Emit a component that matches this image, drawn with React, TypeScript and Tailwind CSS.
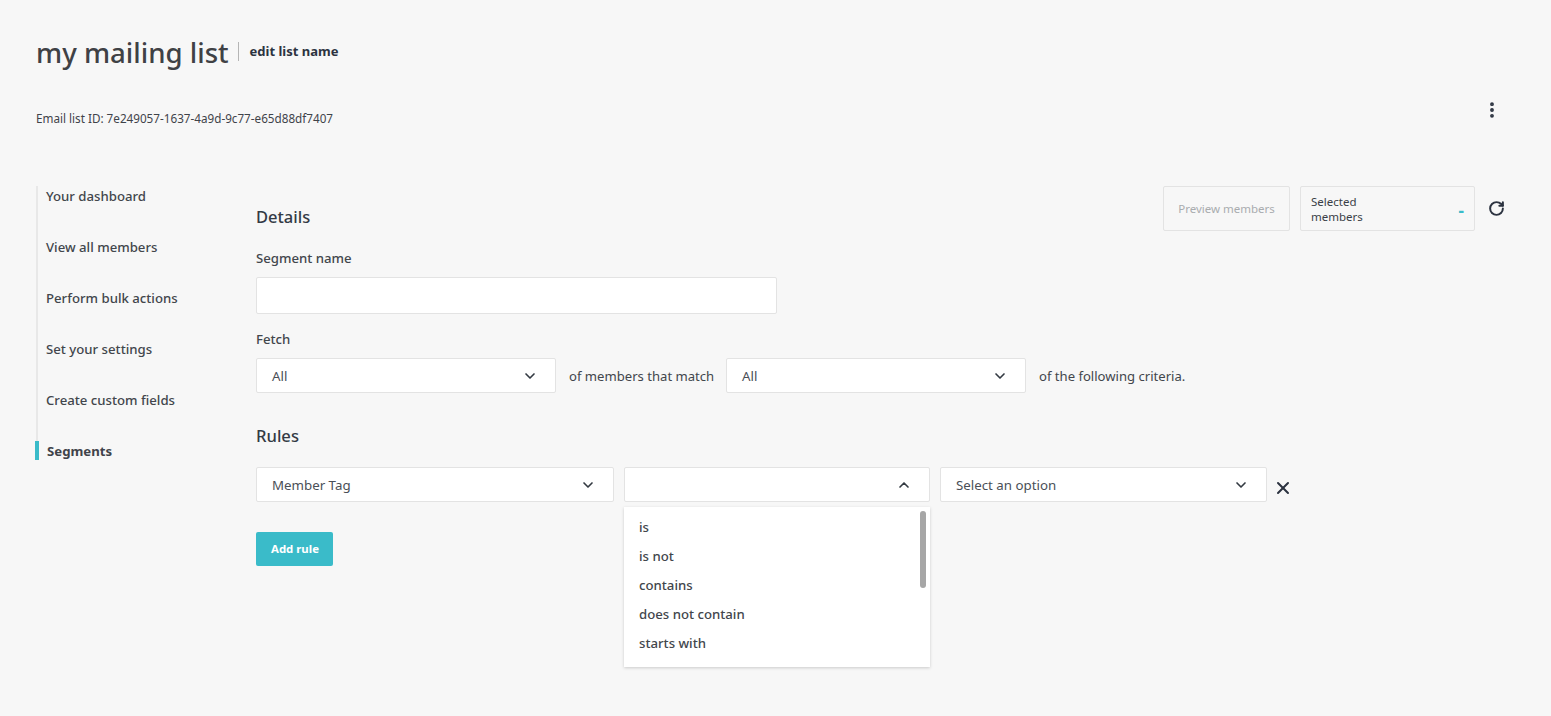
import { ChevronDown, ChevronUp, X, RotateCw, MoreVertical } from 'lucide-react';

const navItems = ['Your dashboard', 'View all members', 'Perform bulk actions', 'Set your settings', 'Create custom fields'];
const options = ['is', 'is not', 'contains', 'does not contain', 'starts with'];

function Select({ value, open, className }: { value?: string; open?: boolean; className: string }) {
    return (
        <div className={`h-[35px] bg-white border border-[#e3e3e3] rounded-[2px] flex items-center justify-between pl-[15px] pr-[17px] text-[13.3px] text-[#4a4f57] ${className}`}>
            <span className="pt-[2px]">{value}</span>
            {open ? (
                <ChevronUp size={16} strokeWidth={2.5} className="text-[#333a42]" />
            ) : (
                <ChevronDown size={16} strokeWidth={2.5} className="text-[#333a42]" />
            )}
        </div>
    );
}

export default function App() {
    return (
        <div className="min-h-[716px] bg-[#f7f7f7] text-[#3f434a] font-['Noto_Sans',sans-serif] overflow-hidden px-9">
            {/* Header */}
            <div className="pt-[32px] flex items-start">
                <h1 className="text-[27.6px] leading-[40px] font-medium text-[#3f4145]">my mailing list</h1>
                <div className="ml-[9px] mt-[10px] w-px h-[19px] bg-[#b5b5b5]" />
                <span className="ml-[11px] mt-[9px] text-[13px] leading-[20px] font-bold text-[#2c3340]">edit list name</span>
            </div>
            <div className="mt-[36px] flex items-start justify-between">
                <p className="text-[11.7px] leading-[20px] text-[#3f434a]">Email list ID: 7e249057-1637-4a9d-9c77-e65d88df7407</p>
                <MoreVertical size={20} strokeWidth={2.6} className="mr-[13px] -mt-[8px] text-[#2c3340]" />
            </div>

            <div className="mt-[58px] flex items-start">
                {/* Sidebar */}
                <nav className="w-[220px] shrink-0 relative border-l-2 border-[#e8e8e8] h-[274px]">
                    {navItems.map((item) => (
                        <div key={item} className="h-[51px] pl-2 text-[13.2px] leading-[20px] font-medium text-[#42464c]">
                            {item}
                        </div>
                    ))}
                    <div className="h-[19px] -ml-[3px] pl-[8px] border-l-[4px] border-[#3abbc9] text-[13.2px] leading-[20px] font-bold text-[#3f434a]">
                        Segments
                    </div>
                </nav>

                {/* Main */}
                <main className="flex-1 relative">
                    <div className="flex items-start justify-between">
                        <h2 className="mt-[20px] text-[16.5px] leading-[22px] font-medium text-[#333a45]">Details</h2>
                        <div className="flex items-start mr-[10px]">
                            <button className="w-[127px] h-[45px] border border-[#e3e3e3] rounded-[2px] text-[11.5px] text-[#a9acaf]">
                                Preview members
                            </button>
                            <div className="ml-[10px] w-[175px] h-[45px] border border-[#e3e3e3] rounded-[2px] flex items-center justify-between pl-[10px] pr-[10px] text-[11.5px] leading-[15px] text-[#3a3f47]">
                                <span className="w-[70px]">Selected members</span>
                                <span className="text-[#3abbc9] font-bold text-[17px] pt-[4px]">-</span>
                            </div>
                            <RotateCw size={17} strokeWidth={2.8} className="ml-[13px] mt-[14px] text-[#2c3340]" />
                        </div>
                    </div>

                    <label className="block mt-[17px] text-[13.2px] leading-[20px] font-medium text-[#42464c]">Segment name</label>
                    <div className="mt-[9px] w-[521px] h-[37px] bg-white border border-[#e3e3e3] rounded-[2px]" />

                    <label className="block mt-[15px] text-[13.2px] leading-[20px] font-medium text-[#42464c]">Fetch</label>
                    <div className="mt-[9px] flex items-center text-[13.1px] text-[#42464c]">
                        <Select value="All" className="w-[300px]" />
                        <span className="ml-[13px] w-[157px] pt-[2px]">of members that match</span>
                        <Select value="All" className="w-[300px]" />
                        <span className="ml-[13px] pt-[2px]">of the following criteria.</span>
                    </div>

                    <h2 className="mt-[32px] text-[16.6px] leading-[22px] font-medium text-[#333a45]">Rules</h2>

                    <div className="mt-[20px] flex items-start">
                        <Select value="Member Tag" className="w-[358px]" />
                        <div className="relative ml-[10px]">
                            <Select open className="w-[306px]" />
                            {/* Open dropdown */}
                            <div className="absolute top-[40px] left-0 w-[306px] h-[160px] bg-white shadow-[0_1px_3px_rgba(0,0,0,0.18)] pt-[6px] z-10">
                                {options.map((option) => (
                                    <div key={option} className="h-[29px] pl-[15px] flex items-center text-[13.2px] font-medium text-[#42464c]">
                                        {option}
                                    </div>
                                ))}
                                <div className="absolute top-[4px] right-[4px] w-[6px] h-[77px] rounded-full bg-[#a6a6a6]" />
                            </div>
                        </div>
                        <Select value="Select an option" className="w-[327px] ml-[10px]" />
                        <X size={20} strokeWidth={2.4} className="ml-[6px] mt-[11px] text-[#2c3340]" />
                    </div>

                    <button className="mt-[30px] w-[77px] h-[34px] pl-px bg-[#3abbc9] rounded-[2px] text-white text-[11.4px] font-bold">
                        Add rule
                    </button>
                </main>
            </div>
        </div>
    );
}
